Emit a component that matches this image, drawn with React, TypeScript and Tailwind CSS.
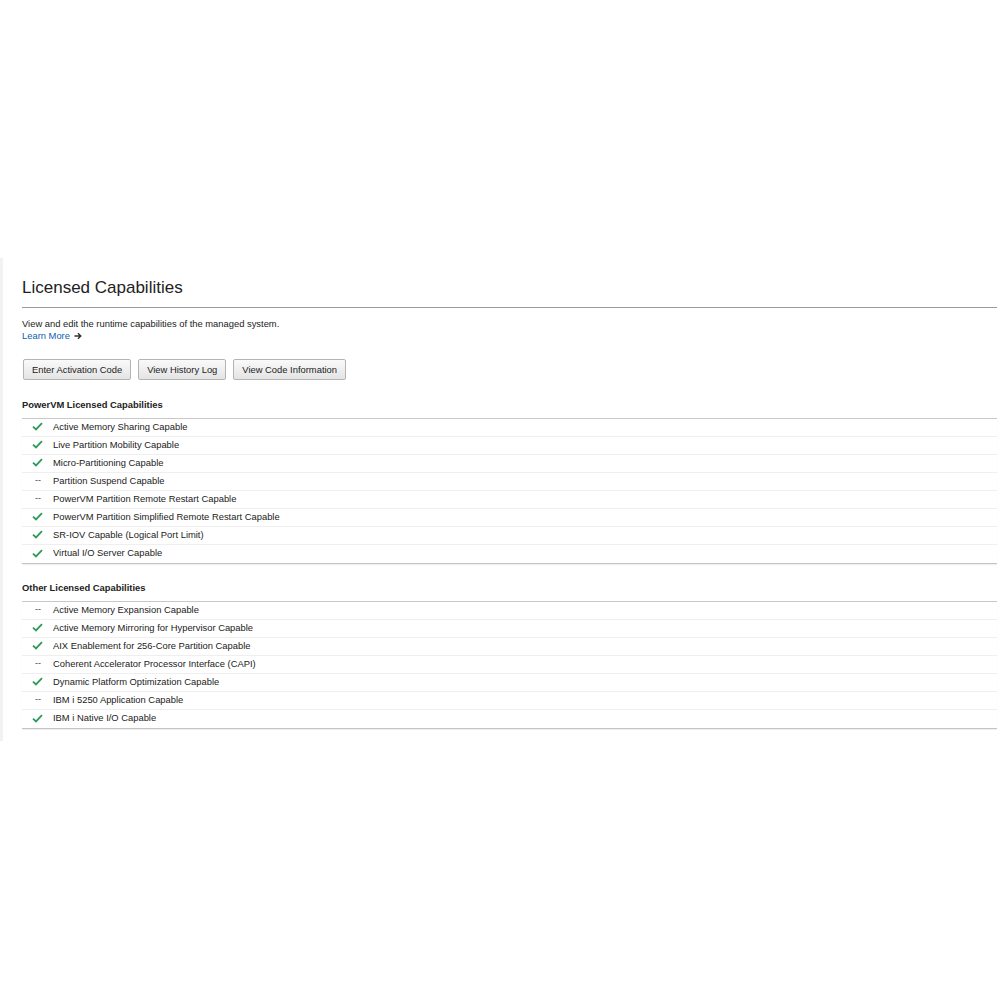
import React from 'react';

type Capability = { name: string; enabled: boolean };

const powerVM: Capability[] = [
  { name: 'Active Memory Sharing Capable', enabled: true },
  { name: 'Live Partition Mobility Capable', enabled: true },
  { name: 'Micro-Partitioning Capable', enabled: true },
  { name: 'Partition Suspend Capable', enabled: false },
  { name: 'PowerVM Partition Remote Restart Capable', enabled: false },
  { name: 'PowerVM Partition Simplified Remote Restart Capable', enabled: true },
  { name: 'SR-IOV Capable (Logical Port Limit)', enabled: true },
  { name: 'Virtual I/O Server Capable', enabled: true },
];

const other: Capability[] = [
  { name: 'Active Memory Expansion Capable', enabled: false },
  { name: 'Active Memory Mirroring for Hypervisor Capable', enabled: true },
  { name: 'AIX Enablement for 256-Core Partition Capable', enabled: true },
  { name: 'Coherent Accelerator Processor Interface (CAPI)', enabled: false },
  { name: 'Dynamic Platform Optimization Capable', enabled: true },
  { name: 'IBM i 5250 Application Capable', enabled: false },
  { name: 'IBM i Native I/O Capable', enabled: true },
];

const Check = () => (
  <svg width="11" height="9" viewBox="0 0 11 9" className="block">
    <path d="M1 4.6 L4 7.4 L10 1.2" fill="none" stroke="#2d9a5c" strokeWidth="1.8" />
  </svg>
);

const Section: React.FC<{ title: string; items: Capability[]; className?: string }> = ({ title, items, className }) => (
  <div className={className}>
    <div className="text-[9.4px] leading-[14px] font-bold text-[#222] pb-[6px] border-b border-[#c8c8c8]">{title}</div>
    <div className="border-b border-[#c4c4c4] shadow-[0_1px_1px_rgba(0,0,0,0.06)]">
      {items.map((item, i) => (
        <div
          key={item.name}
          className={`flex items-center h-[18px] pb-[2px] ${i < items.length - 1 ? 'border-b border-[#efefef]' : ''}`}
        >
          <div className="w-[31px] flex justify-end pr-[10px]">
            {item.enabled ? <Check /> : <span className="text-[9px] text-[#444] pr-[2px] leading-none">--</span>}
          </div>
          <span className="text-[9.4px] text-[#222] leading-none">{item.name}</span>
        </div>
      ))}
    </div>
  </div>
);

const Button: React.FC<{ label: string }> = ({ label }) => (
  <button className="h-[21px] px-[8px] text-[9.4px] text-[#222] border border-[#b4b4b4] rounded-[2px] bg-gradient-to-b from-[#fafafa] to-[#e4e4e4] leading-none">
    {label}
  </button>
);

export default function App() {
  return (
    <div className="w-[1000px] h-[1000px] bg-white font-['Liberation_Sans',Arial,sans-serif]">
      <div className="h-[258px]" />
      <div className="border-l-[3px] border-[#f2f2f2] pl-[19px] pr-[3px] pt-[19px] pb-[12px]">
        <h1 className="text-[17px] leading-[22px] text-[#222] pb-[8px] border-b border-[#9a9a9a]">Licensed Capabilities</h1>
        <p className="mt-[10px] text-[9.4px] leading-[12px] text-[#222]">View and edit the runtime capabilities of the managed system.</p>
        <a className="text-[9.4px] leading-[12px] text-[#0a5fb4] flex items-center gap-[4px]">
          Learn More
          <svg width="8" height="8" viewBox="0 0 8 8">
            <path d="M0.5 4 H6.5 M4 1.2 L6.8 4 L4 6.8" fill="none" stroke="#333" strokeWidth="1.4" />
          </svg>
        </a>
        <div className="flex gap-[7px] mt-[17px] pl-[1px]">
          <Button label="Enter Activation Code" />
          <Button label="View History Log" />
          <Button label="View Code Information" />
        </div>
        <Section title="PowerVM Licensed Capabilities" items={powerVM} className="mt-[18px]" />
        <Section title="Other Licensed Capabilities" items={other} className="mt-[17px]" />
      </div>
    </div>
  );
}
